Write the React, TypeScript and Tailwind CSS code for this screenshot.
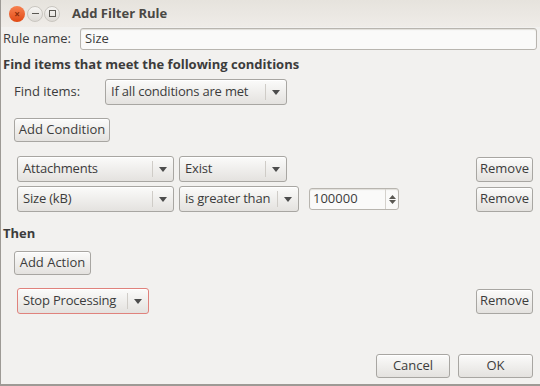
import React from "react";

const font = { fontFamily: '"Open Sans", "DejaVu Sans", sans-serif' };

function Arrow() {
  return (
    <svg width="8" height="5" viewBox="0 0 8 5" className="shrink-0">
      <path d="M0 0 L8 0 L4 5 Z" fill="#4c4c4c" />
    </svg>
  );
}

function Button({ label, className = "" }: { label: string; className?: string }) {
  return (
    <div
      className={`flex items-center justify-center rounded-[3px] border border-[#a8a6a2] bg-gradient-to-b from-[#fbfbfa] to-[#e4e2df] text-[#3c3c3c] shadow-[inset_0_1px_0_#ffffff] ${className}`}
    >
      {label}
    </div>
  );
}

function Combo({
  label,
  className = "",
  red = false,
}: {
  label: string;
  className?: string;
  red?: boolean;
}) {
  return (
    <div
      className={`flex items-center rounded-[3px] border bg-gradient-to-b from-[#fbfbfa] to-[#e4e2df] text-[#3c3c3c] shadow-[inset_0_1px_0_#ffffff] ${
        red ? "border-[#e0827c]" : "border-[#a8a6a2]"
      } ${className}`}
    >
      <span className="flex-1 whitespace-nowrap pl-[5px] tracking-[-0.2px]">{label}</span>
      <div className="h-[16px] w-px shrink-0 bg-[#cfccc7]" />
      <div className="flex w-[20px] shrink-0 justify-center">
        <Arrow />
      </div>
    </div>
  );
}

function RemoveButton() {
  return <Button label="Remove" className="h-[25px] w-[57px]" />;
}

export default function App() {
  return (
    <div
      className="flex h-[386px] w-[540px] flex-col overflow-hidden border-b-2 border-l border-[#9d9a95] bg-[#f2f1ef] text-[13px] text-[#3c3c3c]"
      style={font}
    >
      {/* title bar */}
      <div className="flex h-[27px] shrink-0 items-center bg-gradient-to-b from-[#e6e3dd] to-[#efece8] pl-[8px]">
        <div className="flex h-[16px] w-[16px] items-center justify-center rounded-full bg-gradient-to-b from-[#f7814f] to-[#e0480f] text-[10px] font-bold leading-none text-[#8a2c08]">
          ×
        </div>
        <div className="ml-[2px] flex h-[16px] w-[16px] items-center justify-center rounded-full border border-[#c9c6c0] bg-gradient-to-b from-[#f7f6f4] to-[#dedbd6]">
          <div className="h-[1.5px] w-[7px] bg-[#5a5853]" />
        </div>
        <div className="ml-[1px] flex h-[16px] w-[16px] items-center justify-center rounded-full border border-[#c9c6c0] bg-gradient-to-b from-[#f7f6f4] to-[#dedbd6]">
          <div className="h-[7px] w-[7px] border border-[#5a5853]" />
        </div>
        <span className="ml-[12px] font-bold text-[#4a4844]">Add Filter Rule</span>
      </div>

      <div className="flex flex-1 flex-col pl-[2px] pr-[3px]">
        {/* rule name */}
        <div className="mt-[1px] flex h-[22px] items-center">
          <span className="w-[77px]">Rule name:</span>
          <div className="flex h-[22px] flex-1 items-center rounded-[3px] border border-[#b8b5af] bg-[#fafaf9] pl-[4px] shadow-[inset_0_1px_1px_#e0ded9]">
            Size
          </div>
        </div>

        <div className="mt-[5px] font-bold leading-[18px]">Find items that meet the following conditions</div>

        {/* find items */}
        <div className="mt-[6px] flex h-[26px] items-center pl-[11px]">
          <span className="w-[91px]">Find items:</span>
          <Combo label="If all conditions are met" className="h-[26px] w-[182px]" />
        </div>

        <Button label="Add Condition" className="ml-[11px] mt-[13px] h-[24px] w-[96px]" />

        {/* conditions */}
        <div className="mt-[14px] flex flex-col gap-[4px] pl-[14px] pr-[4px]">
          <div className="flex h-[26px] items-center">
            <Combo label="Attachments" className="h-[26px] w-[157px]" />
            <Combo label="Exist" className="ml-[5px] h-[26px] w-[108px]" />
            <div className="flex-1" />
            <RemoveButton />
          </div>
          <div className="flex h-[26px] items-center">
            <Combo label="Size (kB)" className="h-[26px] w-[157px]" />
            <Combo label="is greater than" className="ml-[5px] h-[26px] w-[120px]" />
            <div className="ml-[10px] flex h-[22px] w-[90px] items-center rounded-[3px] border border-[#b8b5af] bg-[#fafaf9] shadow-[inset_0_1px_1px_#e0ded9]">
              <span className="flex-1 pl-[3px]">100000</span>
              <div className="flex h-full w-[13px] flex-col items-center justify-center gap-[1px] border-l border-[#d4d1cc]">
                <svg width="7" height="4" viewBox="0 0 7 4">
                  <path d="M0 4 L7 4 L3.5 0 Z" fill="#5a5853" />
                </svg>
                <svg width="7" height="4" viewBox="0 0 7 4">
                  <path d="M0 0 L7 0 L3.5 4 Z" fill="#5a5853" />
                </svg>
              </div>
            </div>
            <div className="flex-1" />
            <RemoveButton />
          </div>
        </div>

        <div className="mt-[12px] font-bold leading-[18px]">Then</div>

        <Button label="Add Action" className="ml-[11px] mt-[9px] h-[24px] w-[77px]" />

        <div className="mt-[13px] flex h-[26px] items-center pl-[14px] pr-[4px]">
          <Combo label="Stop Processing" className="h-[26px] w-[132px]" red />
          <div className="flex-1" />
          <RemoveButton />
        </div>

        <div className="flex-1" />

        {/* footer */}
        <div className="mb-[6px] flex justify-end gap-[8px] pr-[4px]">
          <Button label="Cancel" className="h-[24px] w-[74px]" />
          <Button label="OK" className="h-[24px] w-[75px]" />
        </div>
      </div>
    </div>
  );
}
